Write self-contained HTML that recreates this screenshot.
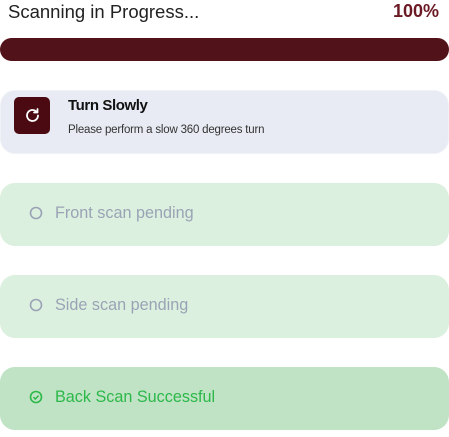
<!DOCTYPE html>
<html><head><style>
*{margin:0;padding:0;box-sizing:border-box}
body{width:449px;height:437px;background:#fff;font-family:"Liberation Sans",sans-serif;position:relative;overflow:hidden}
.a{position:absolute}
.card{position:absolute;left:0;width:449px;height:63px;border-radius:15px;background:#dcf0df}
.card span{position:absolute;left:55px;top:21px;font-size:16.2px;color:#9aa3b5}
.card svg{position:absolute;left:29px;top:23px}
</style></head><body>
<div class="a" style="left:8px;top:1px;font-size:18.5px;color:#222">Scanning in Progress...</div>
<div class="a" style="right:10px;top:1px;font-size:18px;color:#6b1a24;font-weight:bold">100%</div>
<div class="a" style="left:0;top:38px;width:449px;height:23px;border-radius:12px;background:#52121a"></div>
<div class="a" style="left:0;top:90px;width:449px;height:64px;border-radius:15px;background:#e8ebf3;border:1px solid #f0f2f7"></div>
<div class="a" style="left:14px;top:97px;width:36px;height:37px;border-radius:5px;background:#4b0a12"></div>
<svg class="a" style="left:23px;top:106px" width="19" height="19" viewBox="0 0 19 19"><path d="M15 9.5a5.5 5.5 0 1 1-1.6-3.9" fill="none" stroke="#fff" stroke-width="1.8" stroke-linecap="round"/><path d="M14.5 3v3.5h-3.5" fill="none" stroke="#fff" stroke-width="1.8" stroke-linecap="round" stroke-linejoin="round"/></svg>
<div class="a" style="left:68px;top:97px;font-size:15px;color:#111;font-weight:bold;letter-spacing:-0.4px">Turn Slowly</div>
<div class="a" style="left:68px;top:124px;font-size:11.5px;color:#333;letter-spacing:-0.2px">Please perform a slow 360 degrees turn</div>
<div class="card" style="top:183px"><svg width="14" height="14"><circle cx="7" cy="7" r="5.5" fill="none" stroke="#9aa3b5" stroke-width="1.6"/></svg><span>Front scan pending</span></div>
<div class="card" style="top:275px"><svg width="14" height="14"><circle cx="7" cy="7" r="5.5" fill="none" stroke="#9aa3b5" stroke-width="1.6"/></svg><span>Side scan pending</span></div>
<div class="card" style="top:367px;background:#bfe3c4"><svg width="14" height="14"><circle cx="7" cy="7" r="5.5" fill="none" stroke="#2db84a" stroke-width="1.6"/><path d="M4.5 7.2l1.8 1.8 3.3-3.4" fill="none" stroke="#2db84a" stroke-width="1.5"/></svg><span style="color:#2db84a">Back Scan Successful</span></div>
</body></html>
